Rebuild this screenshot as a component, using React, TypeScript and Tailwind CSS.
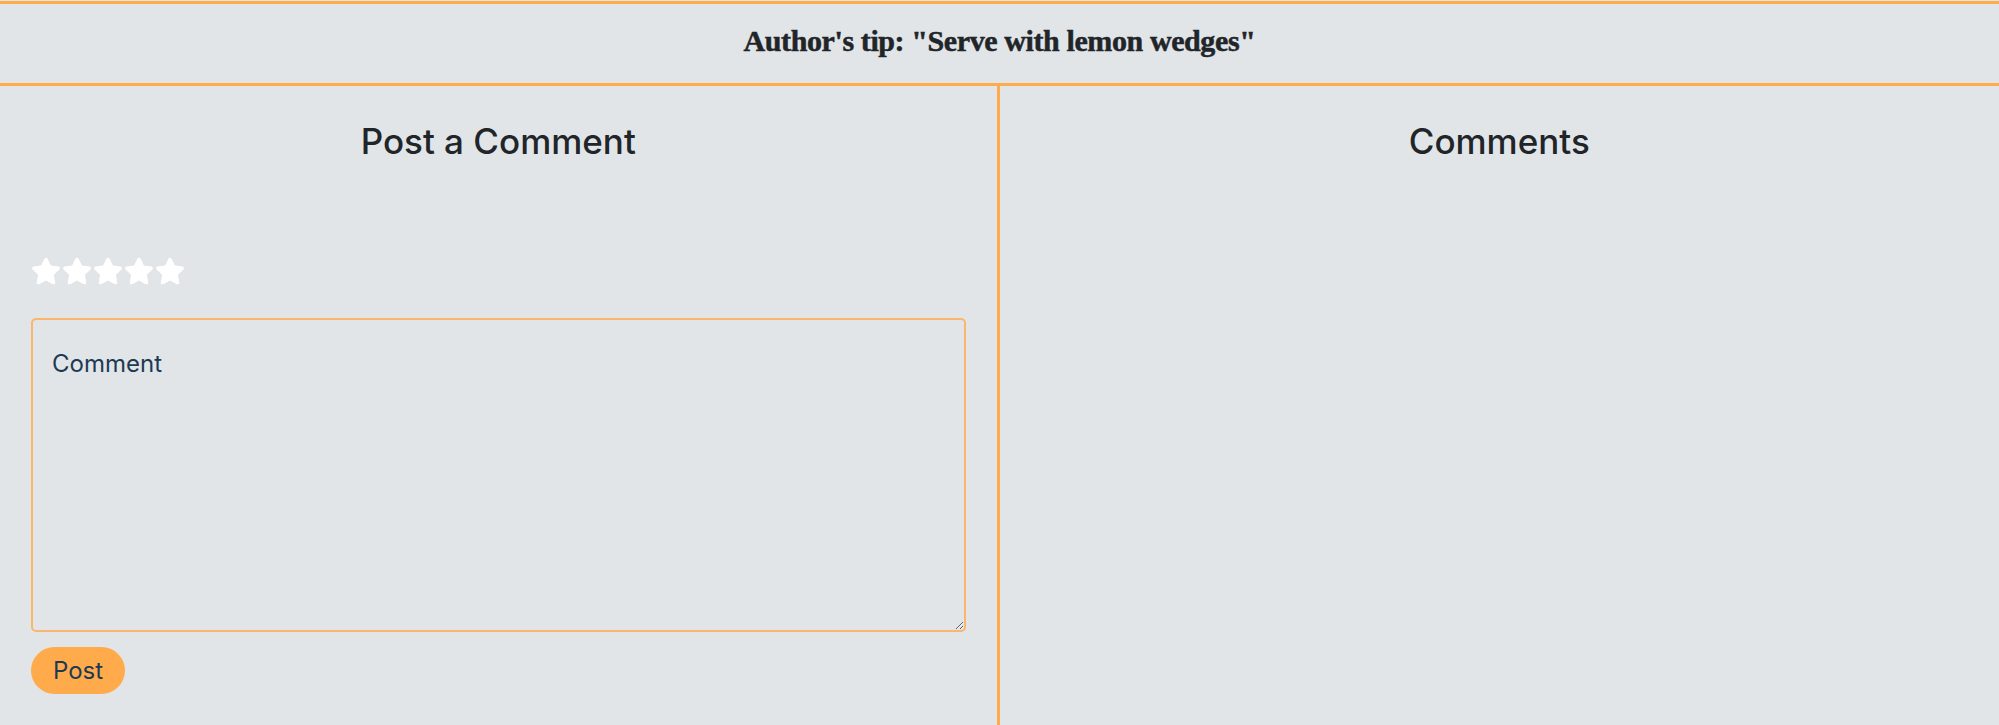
import { FaStar } from "react-icons/fa";

const App = () => {
  return (
    <div className="flex flex-col w-full h-screen bg-[#e1e5e8] text-[#212529] overflow-hidden font-['Inter',sans-serif]">
      <div className="mt-px border-y-[3px] border-[#ffab4c] h-[85px] flex items-center justify-center pb-[6px] shrink-0">
        <h3 className="font-['Liberation_Serif',serif] font-black text-[30px] tracking-[-0.4px] [-webkit-text-stroke:0.5px_#212529]">
          Author's tip: "Serve with lemon wedges"
        </h3>
      </div>
      <div className="grid grid-cols-2 flex-1">
        <div className="border-r-[3px] border-[#ffab4c] px-[31px]">
          <h2 className="text-[35px] font-medium text-center mt-[34px] leading-[1.2]">
            Post a Comment
          </h2>
          <div className="flex gap-px mt-[94px] text-white">
            {[1, 2, 3, 4, 5].map((i) => (
              <FaStar key={i} size="30px" />
            ))}
          </div>
          <textarea
            placeholder="Comment"
            className="mt-[32px] block w-full h-[314px] rounded-[5px] border-2 border-[#fbb56d] bg-transparent px-[19px] pt-[26px] pb-[20px] text-[24px] text-[#1e3a52] placeholder:text-[#1e3a52] outline-none"
          />
          <button className="mt-[15px] h-[47px] px-[22px] rounded-full bg-[#ffab4c] text-[24px] text-[#1e3a52]">
            Post
          </button>
        </div>
        <div>
          <h2 className="text-[35px] font-medium text-center mt-[34px] leading-[1.2]">
            Comments
          </h2>
        </div>
      </div>
    </div>
  );
};

export default App;
